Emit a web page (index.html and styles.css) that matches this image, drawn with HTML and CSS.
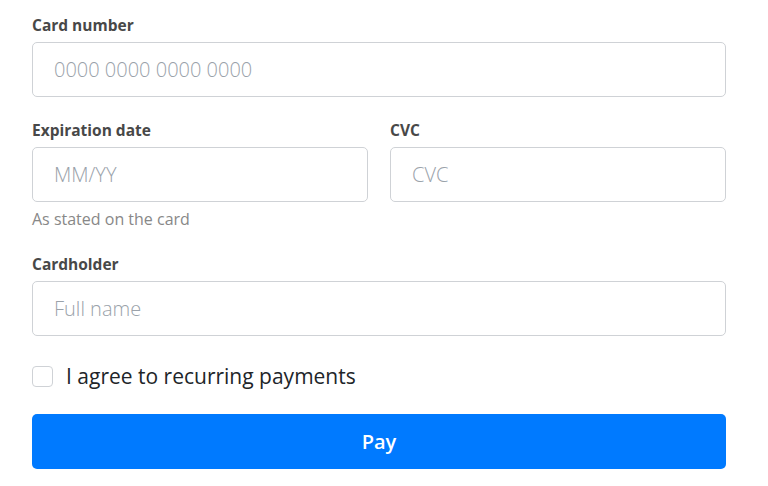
FILE: index.html
```html
<!DOCTYPE html>
<html lang="en">
<head>
    <meta charset="UTF-8">
    <meta name="viewport" content="width=device-width, initial-scale=1.0">
    <title>Payment</title>
    <link rel="stylesheet" href="styles.css">
</head>
<body>
    <form class="pay-form">
        <!-- Card number -->
        <div class="field">
            <label class="label" for="card">Card number</label>
            <input class="input" id="card" type="text" placeholder="0000 0000 0000 0000">
        </div>

        <!-- Expiration + CVC -->
        <div class="row">
            <div class="field">
                <label class="label" for="exp">Expiration date</label>
                <input class="input" id="exp" type="text" placeholder="MM/YY">
                <p class="hint">As stated on the card</p>
            </div>
            <div class="field">
                <label class="label" for="cvc">CVC</label>
                <input class="input" id="cvc" type="text" placeholder="CVC">
            </div>
        </div>

        <!-- Cardholder -->
        <div class="field">
            <label class="label" for="holder">Cardholder</label>
            <input class="input" id="holder" type="text" placeholder="Full name">
        </div>

        <label class="check">
            <input type="checkbox" class="check-box">
            <span>I agree to recurring payments</span>
        </label>

        <button type="submit" class="button">Pay</button>
    </form>
</body>
</html>
```

FILE: styles.css
```css
* {
    margin: 0;
    padding: 0;
    box-sizing: border-box;
    font-family: 'Open Sans', 'Noto Sans', Arial, sans-serif;
}

body {
    background: #fff;
    padding: 15px 42px 0 32px;
}

.pay-form {
    display: flex;
    flex-direction: column;
}

.field {
    display: flex;
    flex-direction: column;
    margin-bottom: 23px;
}

.row {
    display: grid;
    grid-template-columns: 1fr 1fr;
    gap: 22px;
}

.label {
    font-size: 15.5px;
    line-height: 21px;
    font-weight: 700;
    color: #484848;
    margin-bottom: 6px;
}

.input {
    width: 100%;
    height: 55px;
    padding: 0 21px;
    border: 1px solid #cfd2d6;
    border-radius: 5px;
    font-size: 20px;
    font-weight: 300;
    color: #333;
    background: #fff;
}

.input::placeholder {
    color: #9aa2aa;
}

.input:focus {
    outline: none;
    border-color: #80bdff;
}

.hint {
    margin-top: 5px;
    font-size: 16px;
    line-height: 24px;
    color: #888;
}

.check {
    display: flex;
    align-items: center;
    gap: 13px;
    font-size: 21px;
    line-height: 30px;
    color: #212529;
    margin-top: 2px;
    margin-bottom: 23px;
    cursor: pointer;
}

.check-box {
    appearance: none;
    width: 21px;
    height: 21px;
    border: 1px solid #cfd2d6;
    border-radius: 4px;
    background: #fff;
}

.check-box:checked {
    background: #007bff;
    border-color: #007bff;
}

.button {
    width: 100%;
    height: 55px;
    border: none;
    border-radius: 5px;
    background: #007aff;
    color: #fff;
    font-size: 20px;
    font-weight: 600;
    cursor: pointer;
}

.button:hover {
    background: #0069d9;
}
```
